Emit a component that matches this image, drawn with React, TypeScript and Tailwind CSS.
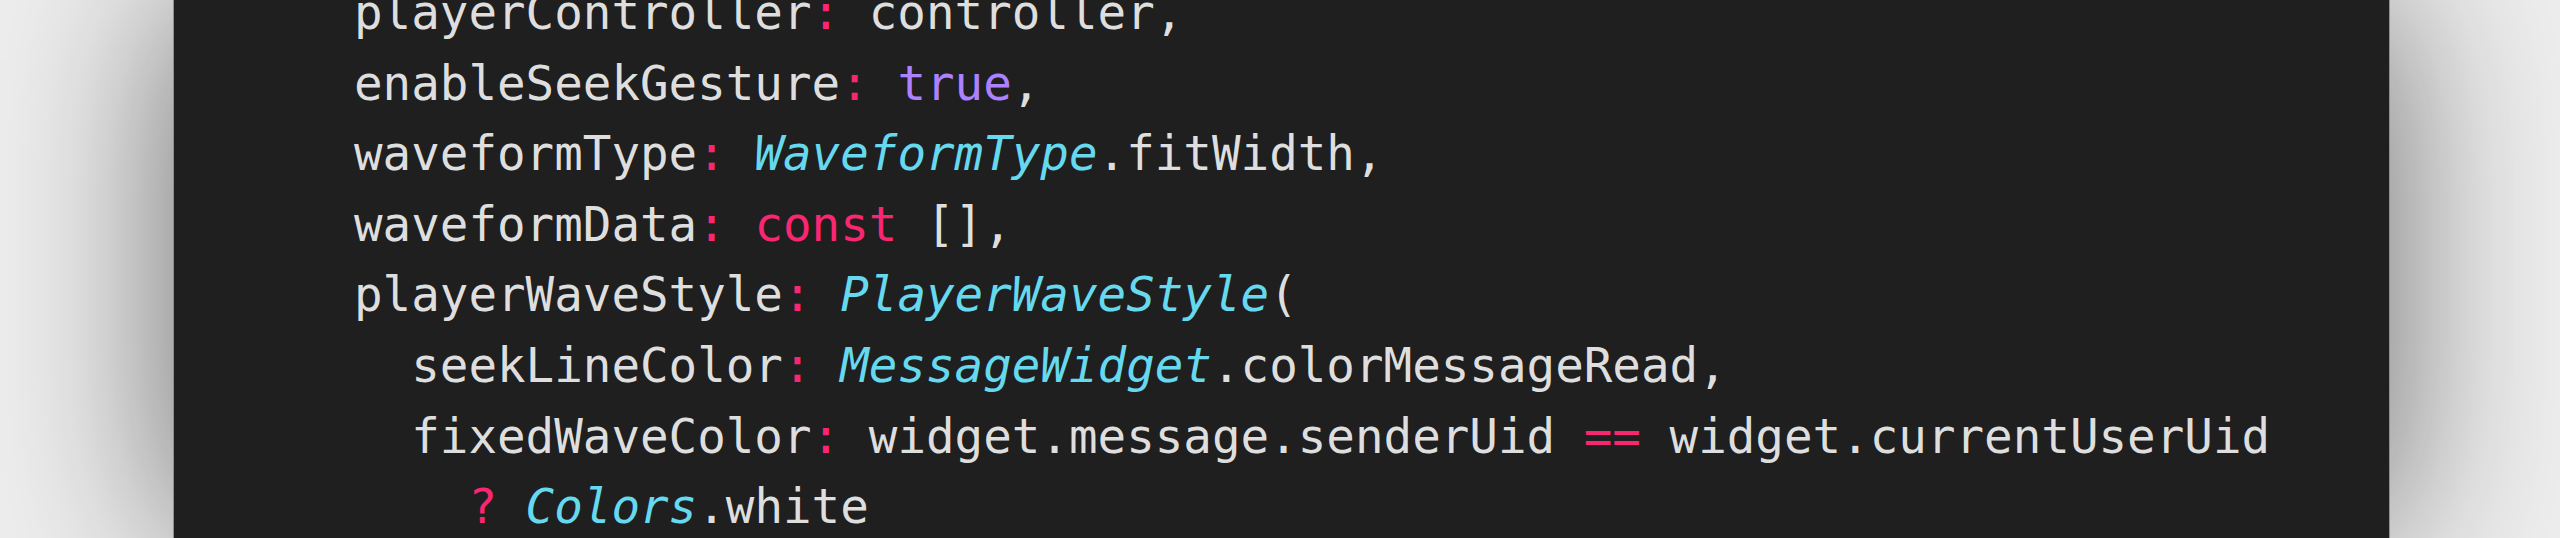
import React from "react";

type Tok = { t: string; c?: "pl" | "pk" | "pu" | "cy" };

const cls: Record<string, string> = {
  pl: "text-[#dedede]",
  pk: "text-[#f92672]",
  pu: "text-[#ae81ff]",
  cy: "text-[#66d9ef] italic",
};

const lines: { indent: number; toks: Tok[] }[] = [
  { indent: 0, toks: [{ t: "playerController" }, { t: ":", c: "pk" }, { t: " controller," }] },
  { indent: 0, toks: [{ t: "enableSeekGesture" }, { t: ":", c: "pk" }, { t: " " }, { t: "true", c: "pu" }, { t: "," }] },
  { indent: 0, toks: [{ t: "waveformType" }, { t: ":", c: "pk" }, { t: " " }, { t: "WaveformType", c: "cy" }, { t: ".fitWidth," }] },
  { indent: 0, toks: [{ t: "waveformData" }, { t: ":", c: "pk" }, { t: " " }, { t: "const", c: "pk" }, { t: " []," }] },
  { indent: 0, toks: [{ t: "playerWaveStyle" }, { t: ":", c: "pk" }, { t: " " }, { t: "PlayerWaveStyle", c: "cy" }, { t: "(" }] },
  { indent: 2, toks: [{ t: "seekLineColor" }, { t: ":", c: "pk" }, { t: " " }, { t: "MessageWidget", c: "cy" }, { t: ".colorMessageRead," }] },
  {
    indent: 2,
    toks: [
      { t: "fixedWaveColor" },
      { t: ":", c: "pk" },
      { t: " widget.message.senderUid " },
      { t: "==", c: "pk" },
      { t: " widget.currentUserUid" },
    ],
  },
  { indent: 4, toks: [{ t: "?", c: "pk" }, { t: " " }, { t: "Colors", c: "cy" }, { t: ".white" }] },
];

export default function App() {
  return (
    <div className="h-[538px] w-[2560px] overflow-hidden bg-[#eeeeee] pl-[173px] pr-[170px] flex">
      <div className="flex-1 bg-[#1f1f1f] border-x border-[#8f8f8f] shadow-[0_0_170px_rgba(0,0,0,0.55)] pl-[180px] overflow-hidden">
        <pre className="-mt-[22px] font-['DejaVu_Sans_Mono',monospace] text-[47.5px] leading-[70.6px] text-[#dedede]">
          {lines.map((l, i) => (
            <div key={i}>
              {" ".repeat(l.indent)}
              {l.toks.map((tk, j) => (
                <span key={j} className={cls[tk.c ?? "pl"]}>
                  {tk.t}
                </span>
              ))}
            </div>
          ))}
        </pre>
      </div>
    </div>
  );
}
